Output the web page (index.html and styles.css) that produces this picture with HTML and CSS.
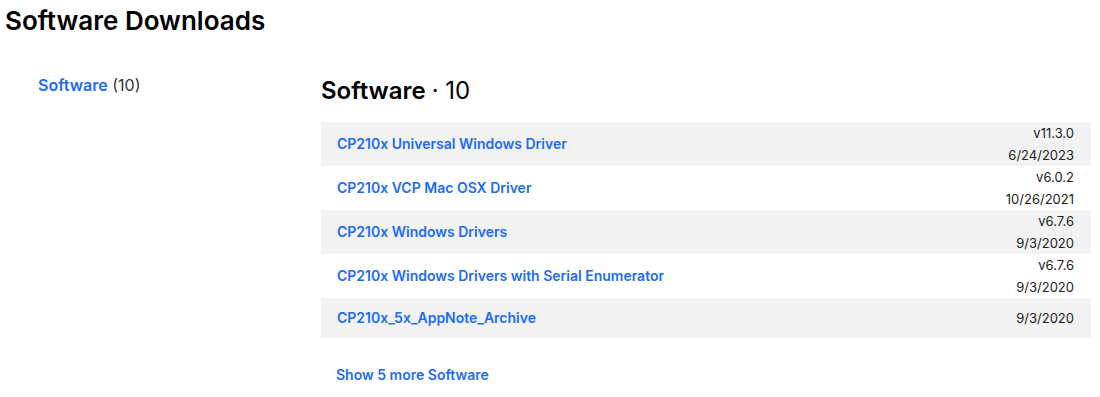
FILE: index.html
```html
<!DOCTYPE html>
<html lang="en">
<head>
    <meta charset="UTF-8">
    <meta name="viewport" content="width=device-width, initial-scale=1.0">
    <title>Software Downloads</title>
    <link rel="stylesheet" href="styles.css">
</head>
<body>
    <h1 class="page-title">Software Downloads</h1>

    <div class="layout">
        <aside class="sidebar">
            <a href="#software" class="filter-link">Software</a>
            <span class="filter-count">(10)</span>
        </aside>

        <main class="downloads" id="software">
            <h2 class="section-title">Software <span class="section-count">· 10</span></h2>

            <ul class="download-list">
                <li class="download-row">
                    <a href="#" class="download-name">CP210x Universal Windows Driver</a>
                    <div class="download-meta">
                        <div>v11.3.0</div>
                        <div>6/24/2023</div>
                    </div>
                </li>
                <li class="download-row">
                    <a href="#" class="download-name">CP210x VCP Mac OSX Driver</a>
                    <div class="download-meta">
                        <div>v6.0.2</div>
                        <div>10/26/2021</div>
                    </div>
                </li>
                <li class="download-row">
                    <a href="#" class="download-name">CP210x Windows Drivers</a>
                    <div class="download-meta">
                        <div>v6.7.6</div>
                        <div>9/3/2020</div>
                    </div>
                </li>
                <li class="download-row">
                    <a href="#" class="download-name">CP210x Windows Drivers with Serial Enumerator</a>
                    <div class="download-meta">
                        <div>v6.7.6</div>
                        <div>9/3/2020</div>
                    </div>
                </li>
                <li class="download-row">
                    <a href="#" class="download-name">CP210x_5x_AppNote_Archive</a>
                    <div class="download-meta">
                        <div>9/3/2020</div>
                    </div>
                </li>
            </ul>

            <a href="#" class="show-more">Show 5 more Software</a>
        </main>
    </div>
</body>
</html>
```

FILE: styles.css
```css
* {
    margin: 0;
    padding: 0;
    box-sizing: border-box;
}

body {
    font-family: Inter, 'Noto Sans', sans-serif;
    color: #1a1a1a;
    background: #fff;
    padding: 0 9px 0 5px;
}

a {
    color: #1c6cf2;
    text-decoration: none;
    font-weight: 600;
}

.page-title {
    font-size: 26px;
    font-weight: 600;
    line-height: 31px;
    margin-top: 5px;
    color: #000;
}

.layout {
    display: flex;
    margin-top: 38px;
}

.sidebar {
    width: 316px;
    flex-shrink: 0;
    padding-left: 33px;
    font-size: 16px;
    line-height: 22px;
}

.filter-count {
    color: #333;
}

.downloads {
    width: 770px;
    padding-top: 2px;
}

.section-title {
    font-size: 24px;
    font-weight: 600;
    line-height: 29px;
    color: #000;
}

.section-count {
    font-weight: 400;
}

.download-list {
    list-style: none;
    margin-top: 17px;
}

.download-row {
    display: flex;
    align-items: center;
    justify-content: space-between;
    min-height: 40px;
    padding: 0 17px 0 16px;
}

.download-row:nth-child(odd) {
    background: #f2f2f2;
}

.download-name {
    font-size: 14px;
    line-height: 22px;
}

.download-meta {
    text-align: right;
    font-size: 13px;
    line-height: 22px;
    color: #222;
}

.show-more {
    display: inline-block;
    margin-top: 26px;
    padding-left: 15px;
    font-size: 14px;
    line-height: 22px;
}
```
